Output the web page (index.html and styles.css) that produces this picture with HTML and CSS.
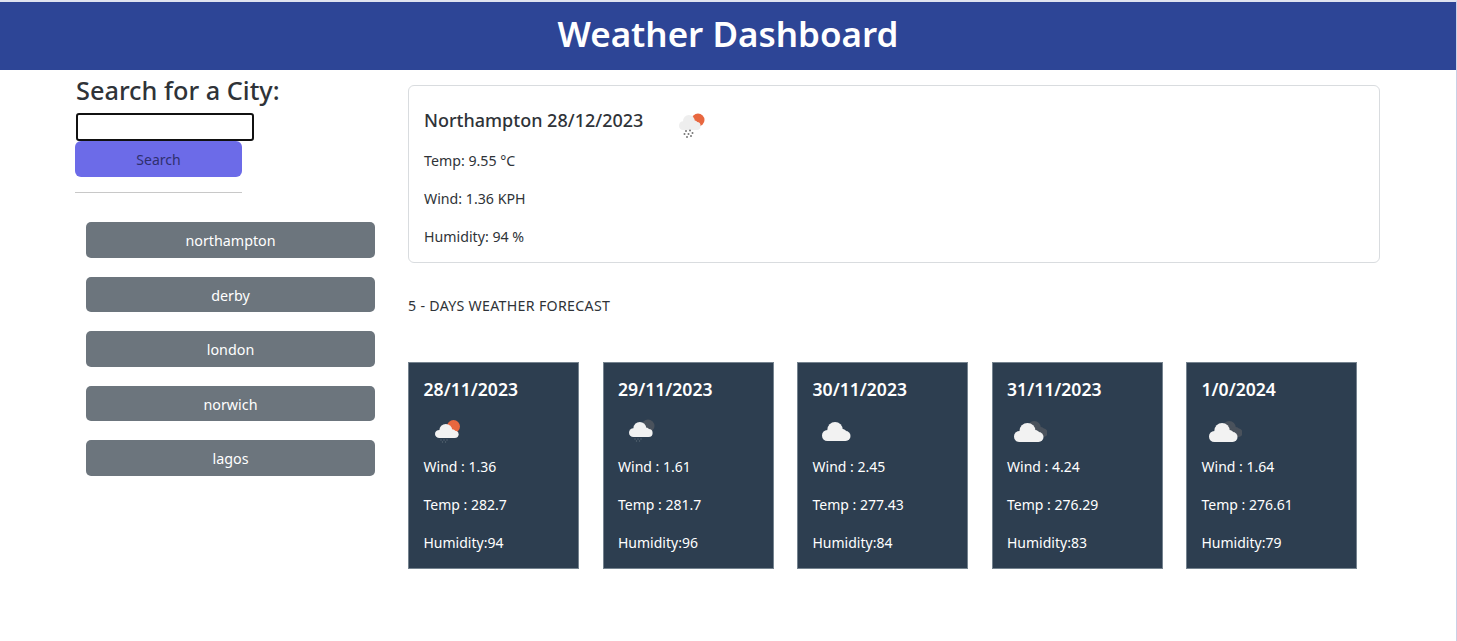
FILE: index.html
```html
<!DOCTYPE html>
<html lang="en">
<head>
    <meta charset="UTF-8">
    <meta name="viewport" content="width=device-width, initial-scale=1.0">
    <title>Weather Dashboard</title>
    <link rel="stylesheet" href="styles.css">
</head>
<body>

<svg class="defs" aria-hidden="true">
    <symbol id="cloud" viewBox="0 0 30 19" preserveAspectRatio="none">
        <circle cx="5.5" cy="13.5" r="5.5"/>
        <circle cx="13.5" cy="8" r="8"/>
        <circle cx="21" cy="11.5" r="4.5"/>
        <circle cx="24.5" cy="14" r="5"/>
        <rect x="5.5" y="10" width="19" height="9"/>
    </symbol>
    <symbol id="drops" viewBox="0 0 10 4">
        <circle cx="2" cy="1" r="0.7"/>
        <circle cx="5" cy="1" r="0.7"/>
        <circle cx="8" cy="1" r="0.7"/>
        <circle cx="3.5" cy="3" r="0.7"/>
        <circle cx="6.5" cy="3" r="0.7"/>
    </symbol>
</svg>

<header class="top-bar">
    <h1>Weather Dashboard</h1>
</header>

<div class="layout">
    <aside class="sidebar">
        <form class="search-form">
            <label class="search-label" for="city">Search for a City:</label>
            <input class="search-input" type="text" id="city">
            <button class="search-btn" type="button">Search</button>
        </form>
        <hr class="divider">
        <div class="history">
            <button class="history-btn" type="button">northampton</button>
            <button class="history-btn" type="button">derby</button>
            <button class="history-btn" type="button">london</button>
            <button class="history-btn" type="button">norwich</button>
            <button class="history-btn" type="button">lagos</button>
        </div>
    </aside>

    <main class="content">
        <section class="today">
            <div class="today-head">
                <h2>Northampton 28/12/2023</h2>
                <svg class="icon" viewBox="0 0 40 40">
                    <circle cx="25" cy="20" r="6.5" fill="#e8673f"/>
                    <use href="#cloud" x="6" y="15" width="22" height="15" fill="#eeeeee"/>
                    <g fill="#777">
                        <circle cx="13" cy="31" r="1"/><circle cx="17" cy="30.5" r="1"/>
                        <circle cx="11.5" cy="34" r="1"/><circle cx="15.5" cy="34" r="1"/><circle cx="19.5" cy="33" r="1"/>
                        <circle cx="14" cy="37" r="1"/><circle cx="18" cy="36" r="1"/>
                    </g>
                </svg>
            </div>
            <p>Temp: 9.55 °C</p>
            <p>Wind: 1.36 KPH</p>
            <p>Humidity: 94 %</p>
        </section>

        <p class="forecast-title">5 - DAYS WEATHER FORECAST</p>

        <section class="forecast">
            <article class="day">
                <h3>28/11/2023</h3>
                <svg class="icon" viewBox="0 0 40 40">
                    <circle cx="29.5" cy="14.5" r="6.5" fill="#e8673f"/>
                    <use href="#cloud" x="11" y="12" width="24" height="14" fill="#f2f2f2"/>
                    <use href="#drops" x="15" y="27" width="10" height="4" fill="#5a6674"/>
                </svg>
                <p>Wind : 1.36</p>
                <p>Temp : 282.7</p>
                <p>Humidity:94</p>
            </article>
            <article class="day">
                <h3>29/11/2023</h3>
                <svg class="icon" viewBox="0 0 40 40">
                    <circle cx="30" cy="14" r="6.5" fill="#4a525c"/>
                    <use href="#cloud" x="11" y="10" width="24" height="15" fill="#f2f2f2"/>
                    <use href="#drops" x="15" y="26" width="10" height="4" fill="#5a6674"/>
                </svg>
                <p>Wind : 1.61</p>
                <p>Temp : 281.7</p>
                <p>Humidity:96</p>
            </article>
            <article class="day">
                <h3>30/11/2023</h3>
                <svg class="icon" viewBox="0 0 40 40">
                    <use href="#cloud" x="9" y="10" width="29" height="19" fill="#f2f2f2"/>
                </svg>
                <p>Wind : 2.45</p>
                <p>Temp : 277.43</p>
                <p>Humidity:84</p>
            </article>
            <article class="day">
                <h3>31/11/2023</h3>
                <svg class="icon" viewBox="0 0 40 40">
                    <use href="#cloud" x="16" y="9" width="25" height="16" fill="#4a525c"/>
                    <use href="#cloud" x="7" y="11" width="30" height="19" fill="#f2f2f2"/>
                </svg>
                <p>Wind : 4.24</p>
                <p>Temp : 276.29</p>
                <p>Humidity:83</p>
            </article>
            <article class="day">
                <h3>1/0/2024</h3>
                <svg class="icon" viewBox="0 0 40 40">
                    <use href="#cloud" x="16" y="9" width="25" height="16" fill="#4a525c"/>
                    <use href="#cloud" x="7" y="11" width="29" height="19" fill="#f2f2f2"/>
                </svg>
                <p>Wind : 1.64</p>
                <p>Temp : 276.61</p>
                <p>Humidity:79</p>
            </article>
        </section>
    </main>
</div>

</body>
</html>
```

FILE: styles.css
```css
/* Reset */
* {
    margin: 0;
    padding: 0;
    box-sizing: border-box;
}

body {
    font-family: "Noto Sans", "Open Sans", sans-serif;
    background: #fff;
    color: #2f3338;
    border-top: 2px solid #dfe3f0;
    border-right: 1px solid #c9d0e6;
    height: 641px;
    overflow: hidden;
}

.defs {
    display: block;
    width: 0;
    height: 0;
}

/* Header */
.top-bar {
    background: #2d4596;
    height: 68px;
    padding-bottom: 6px;
    display: flex;
    align-items: center;
    justify-content: center;
}

.top-bar h1 {
    color: #fff;
    font-size: 35px;
    font-weight: 600;
}

.layout {
    display: flex;
}

/* Left column */
.sidebar {
    width: 408px;
    padding: 2px 0 0 75px;
}

.search-form {
    display: flex;
    flex-direction: column;
    align-items: flex-start;
}

.search-label {
    font-size: 25.3px;
    font-weight: 500;
    line-height: 37px;
    margin-left: 1px;
    margin-bottom: 4px;
}

.search-input {
    width: 178px;
    height: 28px;
    margin-left: 1px;
    border: 2px solid #111;
    border-radius: 3px;
    background: #fff;
}

.search-btn {
    width: 167px;
    height: 36px;
    background: #6c6be8;
    color: #2f2f6e;
    font-family: inherit;
    font-size: 14px;
    border: none;
    border-radius: 6px;
}

.divider {
    width: 167px;
    margin-top: 15px;
    border: none;
    border-top: 1px solid #c8c8c8;
}

.history {
    display: flex;
    flex-direction: column;
    gap: 19px;
    width: 289px;
    margin: 29px 0 0 11px;
}

.history-btn {
    height: 35.5px;
    padding-top: 2px;
    background: #6c757d;
    color: #fff;
    font-family: inherit;
    font-size: 14.3px;
    border: none;
    border-radius: 5px;
}

/* Right column */
.content {
    width: 972px;
    padding-top: 15px;
    font-size: 14.2px;
}

.today {
    height: 178px;
    padding: 14px 15px 15px;
    border: 1px solid #d9dcdf;
    border-radius: 6px;
}

.today-head {
    display: flex;
    align-items: center;
    height: 40px;
    margin-bottom: 11px;
}

.today-head h2 {
    font-size: 18px;
    font-weight: 500;
    margin-right: 30px;
}

.icon {
    display: block;
    width: 40px;
    height: 40px;
}

.today p {
    line-height: 20px;
    margin-bottom: 18px;
}

.forecast-title {
    margin-top: 33px;
    line-height: 20px;
    letter-spacing: 0.3px;
}

.forecast {
    display: flex;
    gap: 23.5px;
    margin-top: 46px;
}

.day {
    width: 171px;
    height: 207px;
    padding: 15px 15px 15px 14.5px;
    background: #2d3e50;
    color: #fff;
    font-size: 14px;
    border: 1px solid #75838f;
}

.day h3 {
    font-size: 17.6px;
    font-weight: 600;
    line-height: 22px;
    margin-bottom: 12px;
}

.day .icon {
    margin-bottom: 5px;
}

.day p {
    line-height: 20px;
    margin-bottom: 18px;
}
```
